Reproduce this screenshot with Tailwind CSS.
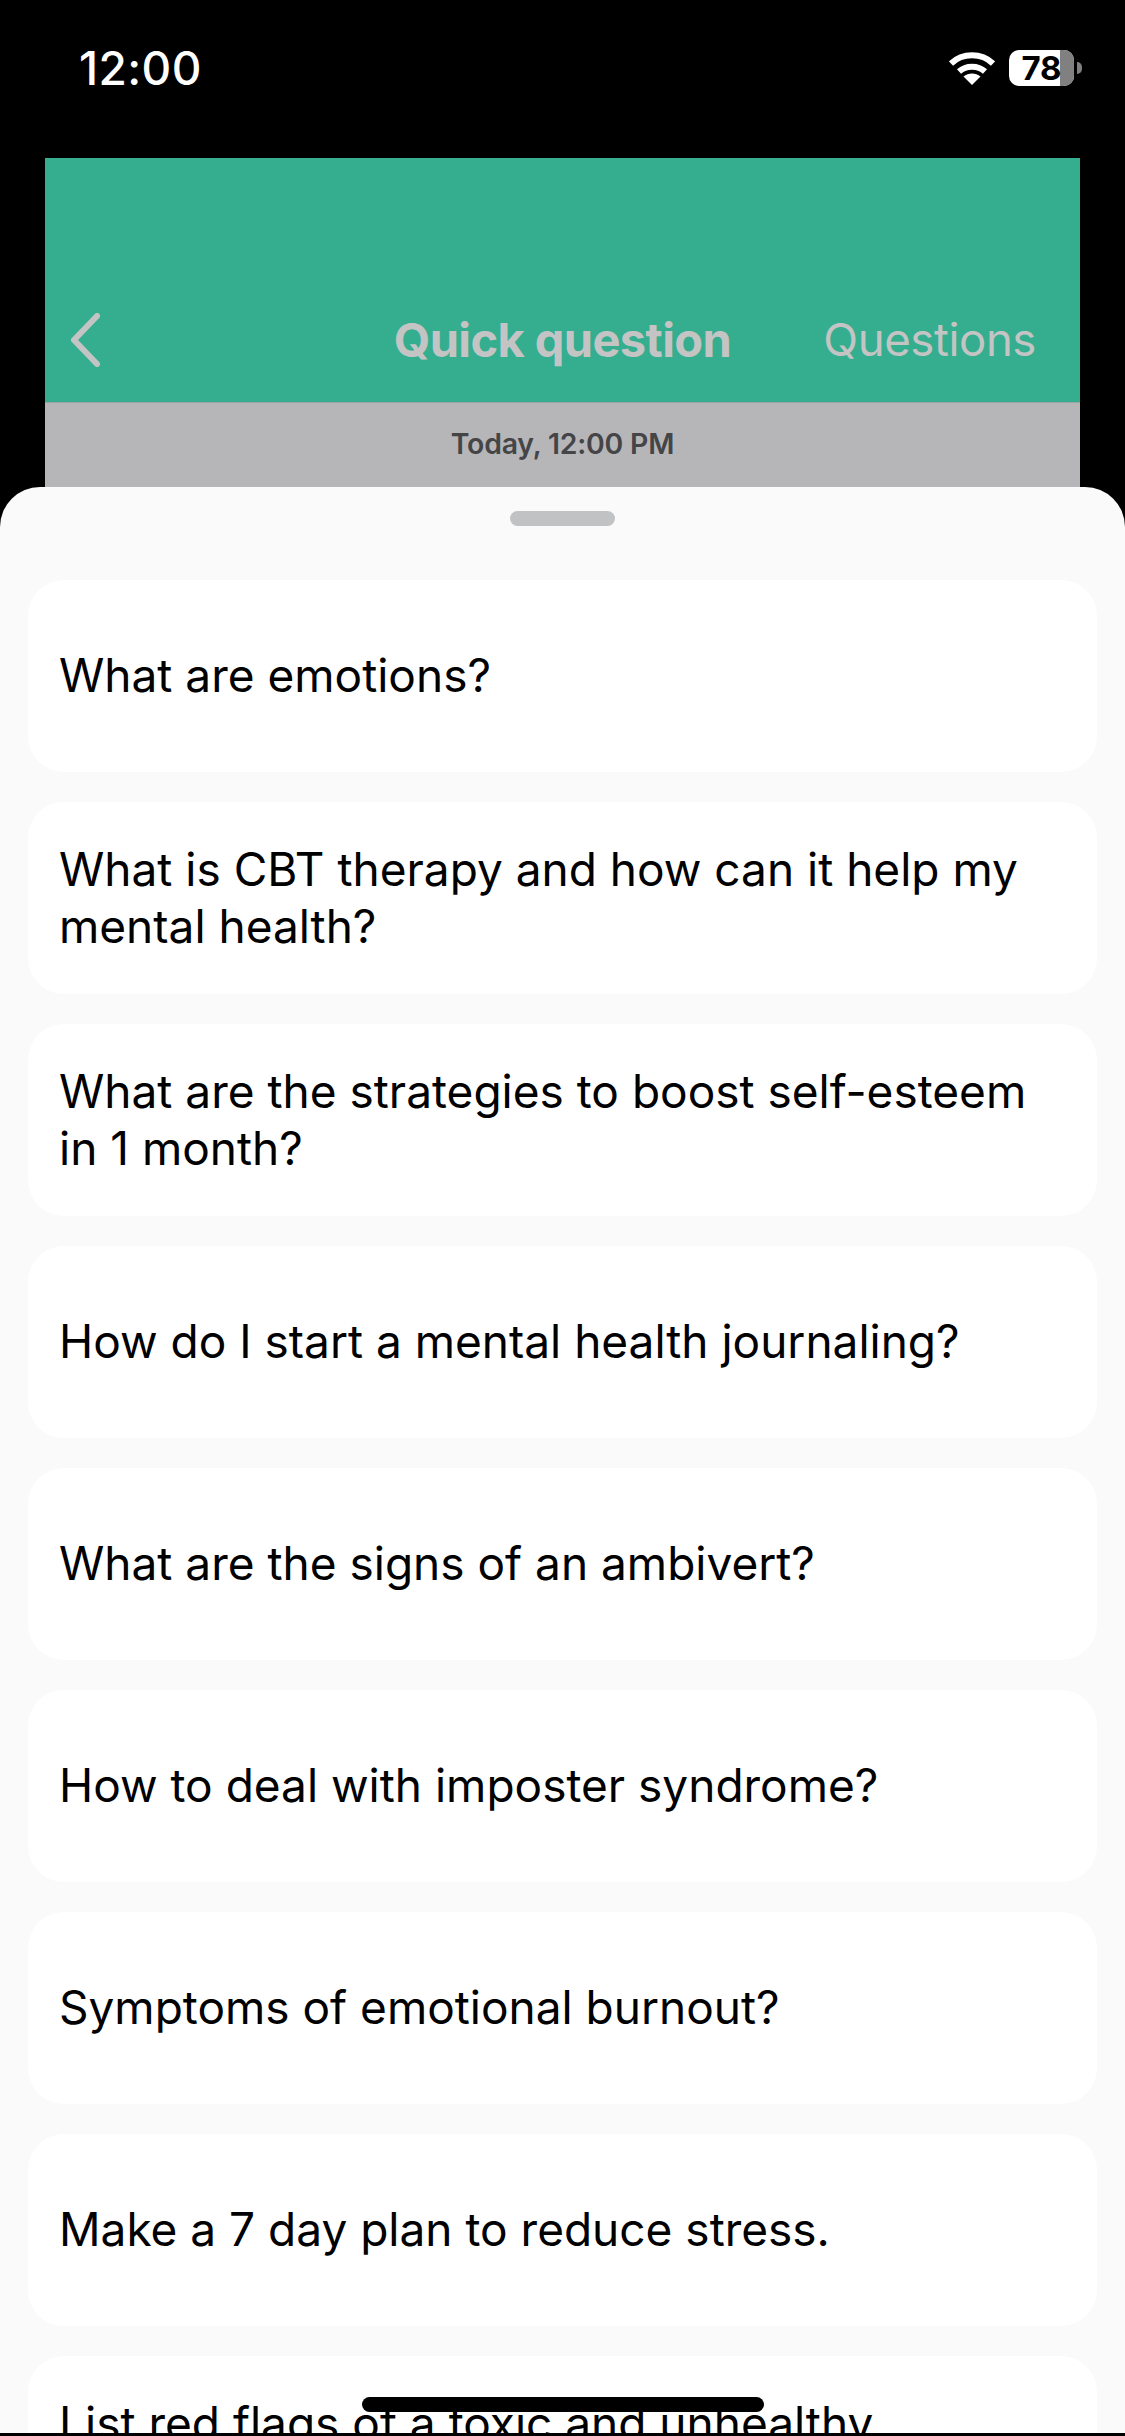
<!DOCTYPE html>
<html lang="en">
<head>
  <meta charset="UTF-8" />
  <meta name="viewport" content="width=device-width, initial-scale=1.0" />
  <title>Quick question</title>
  <script src="https://cdn.jsdelivr.net/npm/@tailwindcss/browser@4"></script>
</head>
<body class="bg-black">
  <div class="relative w-[1125px] h-[2436px] overflow-hidden bg-black font-['Inter',sans-serif]">

    <!-- status bar -->
    <div class="h-[158px] flex items-start justify-between pl-[79px] pr-[43px] pt-[44px] text-white">
      <span class="text-[46px] leading-[48px] font-medium tracking-[0.4px]">12:00</span>
      <div class="flex items-center gap-[14px] pt-[6px]">
        <svg class="w-[46px] h-[34px]" viewBox="0 0 46 34" fill="none">
          <path d="M2 12.5C13.5 1.5 32.5 1.5 44 12.5" stroke="#fff" stroke-width="6" />
          <path d="M10 20.5C17 14 29 14 36 20.5" stroke="#fff" stroke-width="6" />
          <path d="M23 34L14.5 25.5C19.5 21.5 26.5 21.5 31.5 25.5Z" fill="#fff" />
        </svg>
        <div class="flex items-center gap-[3px]">
          <div class="relative w-[65px] h-[36px] rounded-[10px] bg-white">
            <div class="absolute inset-y-0 right-0 w-[14px] rounded-r-[10px] bg-[#808080]"></div>
            <span class="absolute inset-0 flex items-center justify-center text-black text-[33px] font-bold leading-[36px]">78</span>
          </div>
          <div class="w-[5px] h-[12px] rounded-r-full bg-[#808080]"></div>
        </div>
      </div>
    </div>

    <!-- chat screen behind the sheet -->
    <div class="mx-[45px]">
      <div class="h-[244px] bg-[#35ae8f] relative flex items-end justify-center pb-[37px]">
        <svg class="absolute left-[24px] bottom-[35px] w-[32px] h-[54px]" viewBox="0 0 32 54" fill="none">
          <path d="M28 3L5 27L28 51" stroke="#c4c4c4" stroke-width="6" stroke-linecap="round" stroke-linejoin="round" />
        </svg>
        <span class="text-[#c4c4c4] text-[47px] leading-[50px] font-bold tracking-[-0.6px]">Quick question</span>
        <span class="absolute right-[44px] bottom-[37px] text-[#c4c4c4] text-[45.5px] leading-[50px] tracking-[-0.4px]">Questions</span>
      </div>
      <div class="h-[85px] bg-[#b6b6b8] border-t border-[#9aa5a1] flex justify-center pt-[24px]">
        <span class="text-[#454547] text-[28.4px] leading-[34px] font-semibold tracking-[-0.2px]">Today, 12:00 PM</span>
      </div>
    </div>

    <!-- bottom sheet -->
    <div class="absolute top-[487px] left-0 right-0 bottom-[3px] bg-[#fafafa] rounded-t-[40px] overflow-hidden">
      <div class="pt-[24px] pb-[54px] flex justify-center">
        <div class="w-[105px] h-[15px] rounded-full bg-[#c0c2c4]"></div>
      </div>
      <div class="px-[28px] flex flex-col gap-[30px] text-black text-[46px] leading-[57.5px]">
        <div class="h-[192px] shrink-0 flex items-center px-[31px] bg-white rounded-[36px]">What are emotions?</div>
        <div class="h-[192px] shrink-0 flex items-center px-[31px] bg-white rounded-[36px]">What is CBT therapy and how can it help my mental health?</div>
        <div class="h-[192px] shrink-0 flex items-center px-[31px] bg-white rounded-[36px]">What are the strategies to boost self-esteem in 1 month?</div>
        <div class="h-[192px] shrink-0 flex items-center px-[31px] bg-white rounded-[36px]">How do I start a mental health journaling?</div>
        <div class="h-[192px] shrink-0 flex items-center px-[31px] bg-white rounded-[36px]">What are the signs of an ambivert?</div>
        <div class="h-[192px] shrink-0 flex items-center px-[31px] bg-white rounded-[36px]">How to deal with imposter syndrome?</div>
        <div class="h-[192px] shrink-0 flex items-center px-[31px] bg-white rounded-[36px]">Symptoms of emotional burnout?</div>
        <div class="h-[192px] shrink-0 flex items-center px-[31px] bg-white rounded-[36px]">Make a 7 day plan to reduce stress.</div>
        <div class="h-[192px] shrink-0 flex items-center px-[31px] bg-white rounded-[36px]">List red flags of a toxic and unhealthy relationship.</div>
      </div>
    </div>

    <!-- home indicator -->
    <div class="absolute left-[362px] top-[2397px] w-[402px] h-[15px] rounded-full bg-black"></div>
  </div>
</body>
</html>
